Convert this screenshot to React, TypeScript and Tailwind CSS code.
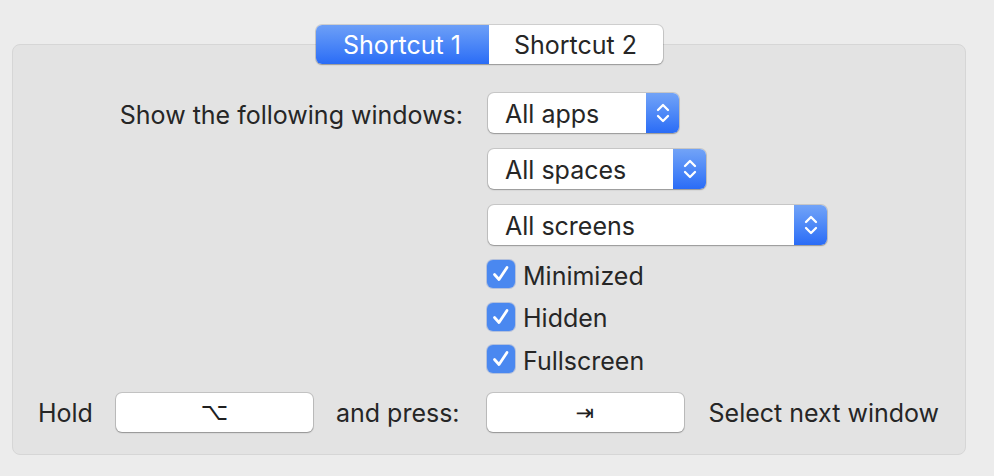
import React from "react";

const font = { fontFamily: "Inter, 'Liberation Sans', sans-serif" };

function Chevrons() {
  return (
    <svg width="16" height="26" viewBox="0 0 16 26" fill="none">
      <path d="M3 10 L8 5 L13 10" stroke="white" strokeWidth="2.3" strokeLinecap="round" strokeLinejoin="round" />
      <path d="M3 16 L8 21 L13 16" stroke="white" strokeWidth="2.3" strokeLinecap="round" strokeLinejoin="round" />
    </svg>
  );
}

function Popup({ label, width }: { label: string; width: string }) {
  return (
    <div
      className={`flex h-[40px] ${width} overflow-hidden rounded-[6px] bg-white shadow-[0_0_0_1px_rgba(0,0,0,0.12),0_1px_1.5px_rgba(0,0,0,0.25)]`}
    >
      <span className="flex flex-1 items-center pl-[17px] pt-[4px] text-[25px] text-[#262626]">{label}</span>
      <span className="flex w-[33px] items-center justify-center bg-gradient-to-b from-[#72a3f7] to-[#2a6cf6]">
        <Chevrons />
      </span>
    </div>
  );
}

function Check({ label }: { label: string }) {
  return (
    <div className="flex h-[28px] items-center gap-[8px]">
      <span className="flex h-[28px] w-[28px] items-center justify-center rounded-[6px] bg-[#4a88f0] shadow-[0_0_0_1px_rgba(40,90,200,0.25)]">
        <svg width="22" height="22" viewBox="0 0 22 22" fill="none">
          <path d="M4.5 11.5 L9 16.5 L17 4.5" stroke="white" strokeWidth="2.8" strokeLinecap="round" strokeLinejoin="round" />
        </svg>
      </span>
      <span className="pt-[3px] text-[25px] leading-[28px] text-[#262626]">{label}</span>
    </div>
  );
}

function KeyBox({ children }: { children: React.ReactNode }) {
  return (
    <div className="flex h-[39px] w-[197px] items-center justify-center rounded-[6px] bg-white text-[#1f1f1f] shadow-[0_0_0_1px_rgba(0,0,0,0.14),0_1px_1.5px_rgba(0,0,0,0.25)]">
      {children}
    </div>
  );
}

export default function App() {
  return (
    <div className="h-[476px] w-[994px] bg-[#ececec] pl-[12px] pt-[25px]" style={font}>
      <div className="w-[954px]">
        <div className="relative z-10 flex justify-center">
          <div className="flex h-[39px] overflow-hidden rounded-[6px] bg-white text-[25px] shadow-[0_0_0_1px_rgba(0,0,0,0.12),0_1px_1.5px_rgba(0,0,0,0.25)]">
            <span className="flex w-[173px] items-center justify-center bg-gradient-to-b from-[#6d9ff7] to-[#2a6cf6] pt-[2px] text-white">
              Shortcut 1
            </span>
            <span className="flex w-[174px] items-center justify-center pt-[2px] text-[#262626]">Shortcut 2</span>
          </div>
        </div>
        <div className="-mt-[20px] h-[411px] w-[954px] rounded-[8px] border border-[#d6d6d6] bg-[#e3e3e3] pt-[48px]">
          <div className="flex">
            <div className="w-[450px] pt-[2px] text-right text-[25px] leading-[40px] text-[#262626]">Show the following windows:</div>
            <div className="ml-[25px] flex flex-col">
              <div className="flex flex-col gap-[16px]">
                <Popup label="All apps" width="w-[191px]" />
                <Popup label="All spaces" width="w-[218px]" />
                <Popup label="All screens" width="w-[339px]" />
              </div>
              <div className="-ml-[1px] mt-[15px] flex flex-col gap-[14.5px]">
                <Check label="Minimized" />
                <Check label="Hidden" />
                <Check label="Fullscreen" />
              </div>
            </div>
          </div>
          <div className="mt-[19px] flex items-center pl-[25px] text-[25px] leading-[39px] text-[#262626]">
            <span className="pt-[2px]">Hold</span>
            <span className="ml-[23px]">
              <KeyBox>
                <span className="text-[24px]" style={{ fontFamily: "'DejaVu Sans', sans-serif" }}>⌥</span>
              </KeyBox>
            </span>
            <span className="ml-[23px] pt-[2px]">and press:</span>
            <span className="ml-[27px]">
              <KeyBox>
                <span className="text-[22px]" style={{ fontFamily: "'DejaVu Sans', sans-serif" }}>⇥</span>
              </KeyBox>
            </span>
            <span className="ml-[25px] pt-[2px]">Select next window</span>
          </div>
        </div>
      </div>
    </div>
  );
}
